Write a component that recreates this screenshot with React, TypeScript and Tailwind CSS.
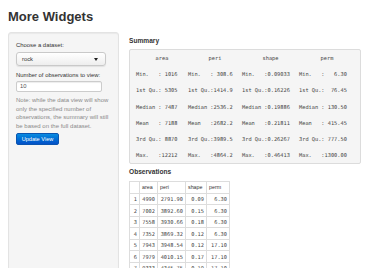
const summaryCols = [
  { name: "area", rows: ["Min.   : 1016", "1st Qu.: 5305", "Median : 7487", "Mean   : 7188", "3rd Qu.: 8870", "Max.   :12212"] },
  { name: "peri", rows: ["Min.   : 308.6", "1st Qu.:1414.9", "Median :2536.2", "Mean   :2682.2", "3rd Qu.:3989.5", "Max.   :4864.2"] },
  { name: "shape", rows: ["Min.   :0.09033", "1st Qu.:0.16226", "Median :0.19886", "Mean   :0.21811", "3rd Qu.:0.26267", "Max.   :0.46413"] },
  { name: "perm", rows: ["Min.   :   6.30", "1st Qu.:  76.45", "Median : 130.50", "Mean   : 415.45", "3rd Qu.: 777.50", "Max.   :1300.00"] },
];

const observations = [
  ["1", "4990", "2791.90", "0.09", "6.30"],
  ["2", "7002", "3892.60", "0.15", "6.30"],
  ["3", "7558", "3930.66", "0.18", "6.30"],
  ["4", "7352", "3869.32", "0.12", "6.30"],
  ["5", "7943", "3948.54", "0.12", "17.10"],
  ["6", "7979", "4010.15", "0.17", "17.10"],
  ["7", "9333", "4345.75", "0.19", "17.10"],
];

const Sidebar = () => {
  return (
    <div className="w-[111px] shrink-0 rounded-[3px] border border-[#e3e3e3] bg-[#f5f5f5] px-[7px] pt-[8px] pb-[7px] shadow-[inset_0_1px_1px_rgba(0,0,0,0.05)]">
      <label className="block text-[5.9px] leading-[8px] text-[#333]">Choose a dataset:</label>
      <div className="mt-[3px] flex h-[14px] w-[90px] items-center justify-between rounded-[3px] border border-[#c9c9c9] bg-gradient-to-b from-white to-[#eeeeee] pl-[5px] pr-[7px] shadow-[0_1px_1px_rgba(0,0,0,0.08)]">
        <span className="text-[5.8px] text-[#333]">rock</span>
        <span className="h-0 w-0 border-x-[2.5px] border-t-[3px] border-x-transparent border-t-[#222]" />
      </div>
      <label className="mt-[5px] block text-[5.9px] leading-[8px] text-[#333]">Number of observations to view:</label>
      <div className="mt-[2px] flex h-[11px] w-[86px] items-center rounded-[2px] border border-[#cccccc] bg-white pl-[3px] shadow-[inset_0_1px_1px_rgba(0,0,0,0.075)]">
        <span className="text-[5.8px] text-[#555]">10</span>
      </div>
      <p className="mt-[4px] text-[6px] leading-[8.7px] not-italic text-[#8a8a8a]">
        Note: while the data view will show only the specified number of observations, the summary will still be based on the full dataset.
      </p>
      <button className="mt-[2px] flex h-[12px] w-[43px] items-center justify-center rounded-[2px] border border-[#0a55b0] bg-gradient-to-b from-[#0a8ae0] to-[#0550c8] text-[5.6px] text-white">
        Update View
      </button>
    </div>
  );
};

const SummaryBox = () => {
  return (
    <div className="mt-[4px] w-[232px] rounded-[2px] border border-[#dcdcdc] bg-[#f5f5f5] pl-[6px] font-['DejaVu_Sans_Mono',monospace] text-[5.3px] leading-[16.2px] text-[#444]">
      <div className="grid grid-cols-[52px_54px_57px_56px]">
        {summaryCols.map((c) => (
          <div key={c.name} className="text-center">{c.name}</div>
        ))}
      </div>
      {[0, 1, 2, 3, 4, 5].map((r) => (
        <div key={r} className="grid grid-cols-[52px_54px_57px_56px] whitespace-pre">
          {summaryCols.map((c) => (
            <div key={c.name}>{c.rows[r]}</div>
          ))}
        </div>
      ))}
    </div>
  );
};

const ObsTable = () => {
  return (
    <table className="mt-[5px] border-collapse border border-[#dddddd] text-[5.3px] text-[#444]">
      <thead>
        <tr>
          <th className="h-[11.5px] w-[10px] border border-[#dddddd]"></th>
          <th className="w-[18px] border border-[#dddddd] px-[2px] text-left font-['Liberation_Sans'] font-normal text-[#333]">area</th>
          <th className="w-[28px] border border-[#dddddd] px-[2px] text-left font-['Liberation_Sans'] font-normal text-[#333]">peri</th>
          <th className="w-[21px] border border-[#dddddd] px-[2px] text-left font-['Liberation_Sans'] font-normal text-[#333]">shape</th>
          <th className="w-[23px] border border-[#dddddd] px-[2px] text-left font-['Liberation_Sans'] font-normal text-[#333]">perm</th>
        </tr>
      </thead>
      <tbody className="font-['DejaVu_Sans_Mono',monospace]">
        {observations.map((row) => (
          <tr key={row[0]}>
            {row.map((v, i) => (
              <td key={i} className="h-[11.5px] border border-[#dddddd] px-[2px] text-right leading-[10px]">{v}</td>
            ))}
          </tr>
        ))}
      </tbody>
    </table>
  );
};

export default function App() {
  return (
    <div className="h-[268px] w-[370px] overflow-hidden bg-white px-[8px] font-['Liberation_Sans',Arial,sans-serif]">
      <h1 className="pt-[8px] text-[13px] font-bold leading-[18px] text-[#333]">More Widgets</h1>
      <div className="mt-[6px] flex gap-[10px]">
        <Sidebar />
        <div className="pt-[5px]">
          <h3 className="text-[6.6px] font-bold leading-[8px] text-[#333]">Summary</h3>
          <SummaryBox />
          <h3 className="mt-[4px] text-[6.6px] font-bold leading-[8px] text-[#333]">Observations</h3>
          <ObsTable />
        </div>
      </div>
    </div>
  );
}
